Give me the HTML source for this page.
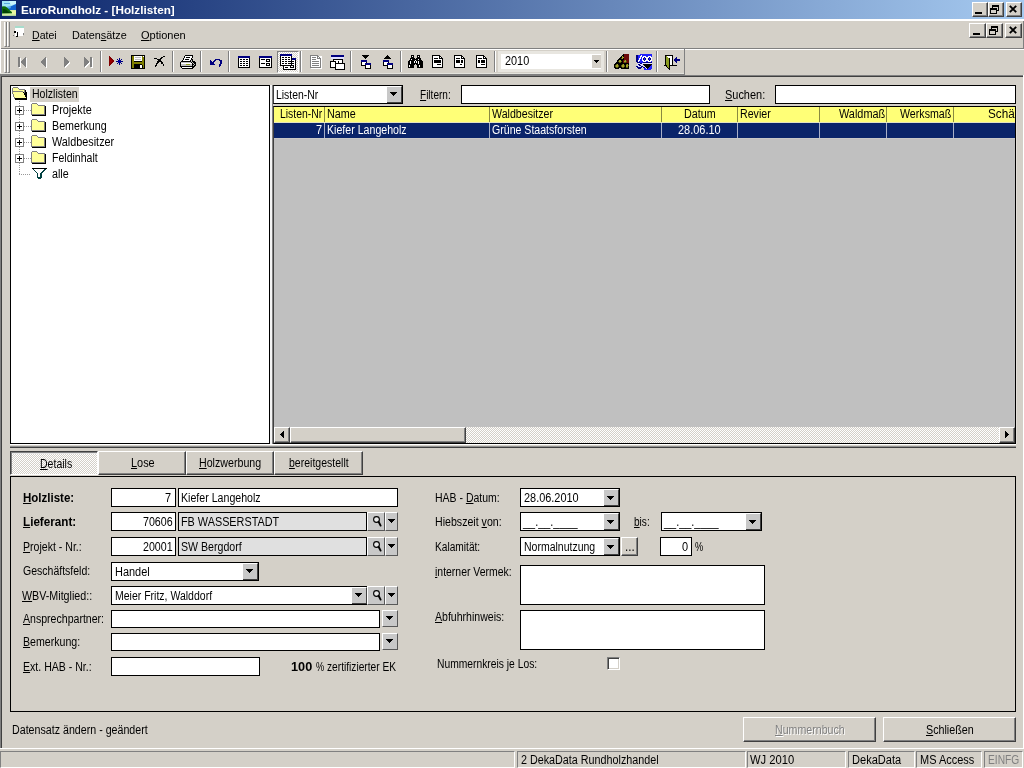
<!DOCTYPE html>
<html lang="de">
<head>
<meta charset="utf-8">
<title>EuroRundholz - [Holzlisten]</title>
<style>
*{box-sizing:border-box;margin:0;padding:0}
html,body{width:1024px;height:768px;overflow:hidden;background:#d4d0c8}
body{position:relative;font-family:"Liberation Sans",sans-serif;font-size:12.5px;line-height:14px;color:#000}
#w{position:absolute;left:0;top:0;width:1024px;height:768px;overflow:hidden;will-change:transform;background:#d4d0c8}
.a{position:absolute}
.t{position:absolute;white-space:nowrap;height:14px;line-height:14px;transform-origin:0 50%}
.tah{font-size:11px}
.wh{color:#fff}
.gry{color:#808080}
.dis{color:#808080;text-shadow:1px 1px 0 #fff}
.b{font-weight:bold}
u{text-decoration:underline;text-underline-offset:1px;text-decoration-thickness:1px}
.fld{position:absolute;background:#fff;border:1px solid #000;height:19px}
.fld.g{background:#e0e0e0}
.fld .t{top:2px}
.dither{background:repeating-conic-gradient(#fff 0% 25%,#d4d0c8 0% 50%) 0 0/2px 2px}
.btn{position:absolute;background:#d4d0c8;border:1px solid;border-color:#fff #404040 #404040 #fff;box-shadow:inset -1px -1px 0 #808080}
.gb{position:absolute;background:#c8c8c8;border:1px solid;border-color:#fff #585858 #585858 #fff}
.vsep{position:absolute;top:51px;height:21px;width:2px;border-left:1px solid #808080;border-right:1px solid #fff}
.grip{position:absolute;width:3px;border-left:1px solid #fff;border-right:1px solid #808080;border-bottom:1px solid #808080}
.sp{position:absolute;top:752px;height:16px;border:1px solid;border-color:#808080 #fff #fff #808080}
.sp .t{top:1px;left:3px}
svg{position:absolute;overflow:visible}
</style>
</head>
<body>
<div id="w">
<!-- TITLE BAR -->
<div class="a" style="left:0;top:0;width:1024px;height:19px;background:linear-gradient(90deg,#0a246a,#a6caf0)"></div>
<div class="a" style="left:0;top:19px;width:1024px;height:2px;background:#fff"></div>
<div class="t b tah wh" style="left:21.1px;top:3px;transform:scaleX(1.066)">EuroRundholz - [Holzlisten]</div>
<svg style="left:2px;top:1px" width="14" height="15" viewBox="0 0 14 15">
<rect width="14" height="15" fill="#9fe4f6"/>
<rect x="2" y="2" width="6" height="1" fill="#58a8e0"/>
<path d="M7 0h7v3l-5 1z" fill="#c8f4fc"/>
<path d="M5 7L14 3V10H5z" fill="#1264d2"/>
<path d="M4 6L8 5L9 7L5 8z" fill="#58b0ee"/>
<path d="M0 9H14V15H0z" fill="#cfeaa0"/>
<path d="M9 9.5H14V13H10z" fill="#e8f6a0"/>
<path d="M0 5.5Q3 4.5 5 6.5Q7 8 8.5 10Q10.5 11 10 12.2L0 12.6z" fill="#0a6a0c"/>
<path d="M1 8Q4 7.5 6 10.5L8.5 12H1z" fill="#024004"/>
<rect x="0" y="14" width="14" height="1" fill="#b4d49a"/>
</svg>
<div class="btn" style="left:972px;top:2px;width:16px;height:15px"></div>
<div class="a" style="left:975px;top:12px;width:7px;height:2px;background:#000"></div>
<div class="btn" style="left:988px;top:2px;width:16px;height:15px"></div>
<svg style="left:990px;top:5px" width="9" height="9" viewBox="0 0 9 9" shape-rendering="crispEdges"><path d="M2 0h7v2h-7z M2 2h1v1h-1z M8 2h1v4h-3v-1h2z M0 3h7v2h-7z M0 5h1v4h-1z M6 5h1v4h-1z M1 8h5v1h-5z" fill="#000"/></svg>
<div class="btn" style="left:1006px;top:2px;width:16px;height:15px"></div>
<svg style="left:1009px;top:5px" width="8" height="8" viewBox="0 0 8 8"><path d="M0.8 0.8L7.2 7.2M7.2 0.8L0.8 7.2" stroke="#000" stroke-width="1.9" fill="none"/></svg>
<!-- MENU BAR -->
<div class="grip" style="left:4px;top:22px;height:25px"></div>
<div class="grip" style="left:7px;top:22px;height:25px"></div>

<div class="t tah" style="left:31.8px;top:28px;transform:scaleX(0.961)"><u>D</u>atei</div>
<div class="t tah" style="left:71.8px;top:28px;transform:scaleX(0.983)">Daten<u>s</u>ätze</div>
<div class="t tah" style="left:141.3px;top:28px;transform:scaleX(1.001)"><u>O</u>ptionen</div>
<div class="btn" style="left:969px;top:23px;width:17px;height:15px"></div>
<div class="a" style="left:973px;top:33px;width:7px;height:2px;background:#000"></div>
<div class="btn" style="left:986px;top:23px;width:17px;height:15px"></div>
<svg style="left:989px;top:26px" width="9" height="9" viewBox="0 0 9 9" shape-rendering="crispEdges"><path d="M2 0h7v2h-7z M2 2h1v1h-1z M8 2h1v4h-3v-1h2z M0 3h7v2h-7z M0 5h1v4h-1z M6 5h1v4h-1z M1 8h5v1h-5z" fill="#000"/></svg>
<div class="btn" style="left:1005px;top:23px;width:17px;height:15px"></div>
<svg style="left:1009px;top:26px" width="8" height="8" viewBox="0 0 8 8"><path d="M0.8 0.8L7.2 7.2M7.2 0.8L0.8 7.2" stroke="#000" stroke-width="1.9" fill="none"/></svg>
<div class="a" style="left:0;top:48px;width:1024px;height:1px;background:#808080"></div>
<div class="a" style="left:0;top:49px;width:1024px;height:1px;background:#fff"></div>
<div class="a" style="left:0;top:21px;width:1px;height:55px;background:#fff"></div>
<div class="a" style="left:1023px;top:21px;width:1px;height:28px;background:#808080"></div>
<div class="a" style="left:1023px;top:75px;width:1px;height:673px;background:#fff"></div>
<!-- TOOLBAR -->
<div class="a" style="left:0;top:73px;width:684px;height:1px;background:#e4e4de"></div>
<div class="a" style="left:0;top:74px;width:685px;height:1px;background:#808080"></div>
<div class="a" style="left:684px;top:49px;width:1px;height:26px;background:#808080"></div>
<div class="a" style="left:0;top:75px;width:1023px;height:1px;background:#808080"></div>
<div class="a" style="left:0;top:76px;width:1023px;height:1px;background:#404040"></div>
<div class="a" style="left:0;top:76px;width:1px;height:672px;background:#808080"></div>
<div class="a" style="left:1px;top:77px;width:1px;height:671px;background:#404040"></div>
<div class="grip" style="left:4px;top:50px;height:23px"></div>
<div class="grip" style="left:7px;top:50px;height:23px"></div>
<div class="vsep" style="left:100px"></div>
<div class="vsep" style="left:172px"></div>
<div class="vsep" style="left:200px"></div>
<div class="vsep" style="left:228px"></div>
<div class="vsep" style="left:300px"></div>
<div class="vsep" style="left:350px"></div>
<div class="vsep" style="left:400px"></div>
<div class="vsep" style="left:494px"></div>
<div class="vsep" style="left:606px"></div>
<div class="vsep" style="left:656px"></div>
<svg style="left:19px;top:58px" width="8" height="10" viewBox="0 0 8 10" shape-rendering="crispEdges"><path fill="#fff" d="M0 0h2v1h-2zM7 0h1v1h-1zM0 1h2v1h-2zM6 1h2v1h-2zM0 2h2v1h-2zM5 2h3v1h-3zM0 3h2v1h-2zM4 3h4v1h-4zM0 4h2v1h-2zM3 4h5v1h-5zM0 5h2v1h-2zM3 5h5v1h-5zM0 6h2v1h-2zM4 6h4v1h-4zM0 7h2v1h-2zM5 7h3v1h-3zM0 8h2v1h-2zM6 8h2v1h-2zM0 9h2v1h-2zM7 9h1v1h-1z"/></svg><svg style="left:18px;top:57px" width="8" height="10" viewBox="0 0 8 10" shape-rendering="crispEdges"><path fill="#808080" d="M0 0h2v1h-2zM7 0h1v1h-1zM0 1h2v1h-2zM6 1h2v1h-2zM0 2h2v1h-2zM5 2h3v1h-3zM0 3h2v1h-2zM4 3h4v1h-4zM0 4h2v1h-2zM3 4h5v1h-5zM0 5h2v1h-2zM3 5h5v1h-5zM0 6h2v1h-2zM4 6h4v1h-4zM0 7h2v1h-2zM5 7h3v1h-3zM0 8h2v1h-2zM6 8h2v1h-2zM0 9h2v1h-2zM7 9h1v1h-1z"/></svg>
<svg style="left:42px;top:58px" width="5" height="10" viewBox="0 0 5 10" shape-rendering="crispEdges"><path fill="#fff" d="M4 0h1v1h-1zM3 1h2v1h-2zM2 2h3v1h-3zM1 3h4v1h-4zM0 4h5v1h-5zM0 5h5v1h-5zM1 6h4v1h-4zM2 7h3v1h-3zM3 8h2v1h-2zM4 9h1v1h-1z"/></svg><svg style="left:41px;top:57px" width="5" height="10" viewBox="0 0 5 10" shape-rendering="crispEdges"><path fill="#808080" d="M4 0h1v1h-1zM3 1h2v1h-2zM2 2h3v1h-3zM1 3h4v1h-4zM0 4h5v1h-5zM0 5h5v1h-5zM1 6h4v1h-4zM2 7h3v1h-3zM3 8h2v1h-2zM4 9h1v1h-1z"/></svg>
<svg style="left:65px;top:58px" width="5" height="10" viewBox="0 0 5 10" shape-rendering="crispEdges"><path fill="#fff" d="M0 0h1v1h-1zM0 1h2v1h-2zM0 2h3v1h-3zM0 3h4v1h-4zM0 4h5v1h-5zM0 5h5v1h-5zM0 6h4v1h-4zM0 7h3v1h-3zM0 8h2v1h-2zM0 9h1v1h-1z"/></svg><svg style="left:64px;top:57px" width="5" height="10" viewBox="0 0 5 10" shape-rendering="crispEdges"><path fill="#808080" d="M0 0h1v1h-1zM0 1h2v1h-2zM0 2h3v1h-3zM0 3h4v1h-4zM0 4h5v1h-5zM0 5h5v1h-5zM0 6h4v1h-4zM0 7h3v1h-3zM0 8h2v1h-2zM0 9h1v1h-1z"/></svg>
<svg style="left:85px;top:58px" width="8" height="10" viewBox="0 0 8 10" shape-rendering="crispEdges"><path fill="#fff" d="M0 0h1v1h-1zM6 0h2v1h-2zM0 1h2v1h-2zM6 1h2v1h-2zM0 2h3v1h-3zM6 2h2v1h-2zM0 3h4v1h-4zM6 3h2v1h-2zM0 4h5v1h-5zM6 4h2v1h-2zM0 5h5v1h-5zM6 5h2v1h-2zM0 6h4v1h-4zM6 6h2v1h-2zM0 7h3v1h-3zM6 7h2v1h-2zM0 8h2v1h-2zM6 8h2v1h-2zM0 9h1v1h-1zM6 9h2v1h-2z"/></svg><svg style="left:84px;top:57px" width="8" height="10" viewBox="0 0 8 10" shape-rendering="crispEdges"><path fill="#808080" d="M0 0h1v1h-1zM6 0h2v1h-2zM0 1h2v1h-2zM6 1h2v1h-2zM0 2h3v1h-3zM6 2h2v1h-2zM0 3h4v1h-4zM6 3h2v1h-2zM0 4h5v1h-5zM6 4h2v1h-2zM0 5h5v1h-5zM6 5h2v1h-2zM0 6h4v1h-4zM6 6h2v1h-2zM0 7h3v1h-3zM6 7h2v1h-2zM0 8h2v1h-2zM6 8h2v1h-2zM0 9h1v1h-1zM6 9h2v1h-2z"/></svg>
<svg style="left:109px;top:56px" width="5" height="10" viewBox="0 0 5 10" shape-rendering="crispEdges"><path fill="#800000" d="M0 0h1v1h-1zM0 1h2v1h-2zM0 2h3v1h-3zM0 3h1v1h-1zM2 3h2v1h-2zM0 4h1v1h-1zM3 4h2v1h-2zM0 5h1v1h-1zM3 5h2v1h-2zM0 6h1v1h-1zM2 6h2v1h-2zM0 7h3v1h-3zM0 8h2v1h-2zM0 9h1v1h-1z"/><path fill="#a00000" d="M1 3h1v1h-1zM1 4h2v1h-2zM1 5h2v1h-2zM1 6h1v1h-1z"/></svg>
<svg style="left:116px;top:58px" width="7" height="7" viewBox="0 0 7 7" shape-rendering="crispEdges"><path fill="#000080" d="M3 0h1v1h-1zM1 1h1v1h-1zM3 1h1v1h-1zM5 1h1v1h-1zM2 2h1v1h-1zM4 2h1v1h-1zM0 3h2v1h-2zM5 3h2v1h-2zM2 4h1v1h-1zM4 4h1v1h-1zM1 5h1v1h-1zM3 5h1v1h-1zM5 5h1v1h-1zM3 6h1v1h-1z"/><path fill="#0000a8" d="M3 2h1v1h-1zM2 3h3v1h-3zM3 4h1v1h-1z"/></svg>
<svg style="left:131px;top:55px" width="14" height="14" viewBox="0 0 14 14" shape-rendering="crispEdges"><path fill="#000" d="M0 0h14v1h-14zM0 1h1v1h-1zM13 1h1v1h-1zM0 2h1v1h-1zM13 2h1v1h-1zM0 3h1v1h-1zM13 3h1v1h-1zM0 4h1v1h-1zM13 4h1v1h-1zM0 5h1v1h-1zM13 5h1v1h-1zM0 6h1v1h-1zM3 6h8v1h-8zM13 6h1v1h-1zM0 7h1v1h-1zM13 7h1v1h-1zM0 8h1v1h-1zM13 8h1v1h-1zM0 9h1v1h-1zM3 9h8v1h-8zM13 9h1v1h-1zM0 10h1v1h-1zM3 10h6v1h-6zM11 10h1v1h-1zM13 10h1v1h-1zM0 11h1v1h-1zM3 11h6v1h-6zM11 11h1v1h-1zM13 11h1v1h-1zM0 12h1v1h-1zM3 12h6v1h-6zM11 12h1v1h-1zM13 12h1v1h-1zM0 13h14v1h-14z"/><path fill="#808000" d="M1 1h2v1h-2zM11 1h1v1h-1zM1 2h2v1h-2zM11 2h2v1h-2zM1 3h2v1h-2zM11 3h2v1h-2zM1 4h2v1h-2zM11 4h2v1h-2zM1 5h2v1h-2zM11 5h2v1h-2zM1 6h2v1h-2zM11 6h2v1h-2zM1 7h12v1h-12zM1 8h12v1h-12zM1 9h2v1h-2zM11 9h2v1h-2zM1 10h2v1h-2zM12 10h1v1h-1zM1 11h2v1h-2zM12 11h1v1h-1zM1 12h2v1h-2zM12 12h1v1h-1z"/><path fill="#fff" d="M3 1h8v1h-8zM12 1h1v1h-1zM3 2h1v1h-1zM10 2h1v1h-1zM3 3h8v1h-8zM3 4h1v1h-1zM10 4h1v1h-1zM3 5h8v1h-8zM9 10h2v1h-2zM9 11h2v1h-2zM9 12h2v1h-2z"/><path fill="#c0c0c0" d="M4 2h6v1h-6zM4 4h6v1h-6z"/></svg>
<svg style="left:154px;top:56px" width="12" height="11" viewBox="0 0 12 11" shape-rendering="crispEdges"><path fill="#000" d="M9 0h2v1h-2zM7 1h2v1h-2zM0 2h3v1h-3zM6 2h2v1h-2zM3 3h4v1h-4zM4 4h3v1h-3zM3 5h5v1h-5zM3 6h2v1h-2zM7 6h2v1h-2zM2 7h2v1h-2zM7 7h2v1h-2zM2 8h1v1h-1zM9 8h1v1h-1zM1 9h2v1h-2zM9 9h1v1h-1zM1 10h1v1h-1z"/></svg>
<svg style="left:180px;top:55px" width="16" height="14" viewBox="0 0 16 14" shape-rendering="crispEdges"><path fill="#000" d="M5 0h8v1h-8zM4 1h1v1h-1zM12 1h1v1h-1zM4 2h1v1h-1zM6 2h4v1h-4zM12 2h1v1h-1zM3 3h1v1h-1zM11 3h1v1h-1zM3 4h1v1h-1zM5 4h4v1h-4zM11 4h2v1h-2zM2 5h1v1h-1zM10 5h1v1h-1zM12 5h1v1h-1zM1 6h10v1h-10zM12 6h3v1h-3zM0 7h1v1h-1zM11 7h1v1h-1zM13 7h3v1h-3zM0 8h1v1h-1zM12 8h1v1h-1zM14 8h2v1h-2zM0 9h1v1h-1zM12 9h2v1h-2zM15 9h1v1h-1zM0 10h1v1h-1zM12 10h1v1h-1zM14 10h2v1h-2zM0 11h15v1h-15zM1 12h1v1h-1zM12 12h2v1h-2zM2 13h11v1h-11z"/><path fill="#fff" d="M5 1h7v1h-7zM5 2h1v1h-1zM10 2h2v1h-2zM4 3h7v1h-7zM4 4h1v1h-1zM9 4h2v1h-2zM3 5h7v1h-7zM1 8h11v1h-11zM2 12h10v1h-10z"/><path fill="#c0c0c0" d="M11 5h1v1h-1zM11 6h1v1h-1zM1 7h10v1h-10zM12 7h1v1h-1zM13 8h1v1h-1zM1 9h5v1h-5zM10 9h2v1h-2zM14 9h1v1h-1zM1 10h11v1h-11zM13 10h1v1h-1z"/><path fill="#8c9c20" d="M6 9h4v1h-4z"/></svg>
<svg style="left:210px;top:59px" width="13" height="8" viewBox="0 0 13 8" shape-rendering="crispEdges"><path fill="#000080" d="M5 0h5v1h-5zM0 1h1v1h-1zM4 1h2v1h-2zM9 1h3v1h-3zM0 2h2v1h-2zM3 2h2v1h-2zM10 2h2v1h-2zM0 3h4v1h-4zM10 3h2v1h-2zM0 4h4v1h-4zM10 4h2v1h-2zM0 5h5v1h-5zM9 5h2v1h-2zM9 6h2v1h-2zM9 7h1v1h-1z"/></svg>
<svg style="left:238px;top:56px" width="12" height="12" viewBox="0 0 12 12" shape-rendering="crispEdges"><path fill="#000080" d="M0 0h12v1h-12zM0 1h12v1h-12z"/><path fill="#000" d="M0 2h1v1h-1zM11 2h1v1h-1zM0 3h1v1h-1zM2 3h2v1h-2zM5 3h2v1h-2zM8 3h2v1h-2zM11 3h1v1h-1zM0 4h1v1h-1zM11 4h1v1h-1zM0 5h1v1h-1zM2 5h2v1h-2zM5 5h2v1h-2zM8 5h2v1h-2zM11 5h1v1h-1zM0 6h1v1h-1zM11 6h1v1h-1zM0 7h1v1h-1zM2 7h2v1h-2zM5 7h2v1h-2zM8 7h2v1h-2zM11 7h1v1h-1zM0 8h1v1h-1zM11 8h1v1h-1zM0 9h1v1h-1zM2 9h2v1h-2zM5 9h2v1h-2zM8 9h2v1h-2zM11 9h1v1h-1zM0 10h1v1h-1zM11 10h1v1h-1zM0 11h12v1h-12z"/><path fill="#fff" d="M1 2h10v1h-10zM1 3h1v1h-1zM4 3h1v1h-1zM7 3h1v1h-1zM10 3h1v1h-1zM1 4h10v1h-10zM1 5h1v1h-1zM4 5h1v1h-1zM7 5h1v1h-1zM10 5h1v1h-1zM1 6h10v1h-10zM1 7h1v1h-1zM4 7h1v1h-1zM7 7h1v1h-1zM10 7h1v1h-1zM1 8h10v1h-10zM1 9h1v1h-1zM4 9h1v1h-1zM7 9h1v1h-1zM10 9h1v1h-1zM1 10h10v1h-10z"/></svg>
<svg style="left:259px;top:56px" width="13" height="12" viewBox="0 0 13 12" shape-rendering="crispEdges"><path fill="#000080" d="M0 0h13v1h-13zM0 1h13v1h-13z"/><path fill="#000" d="M0 2h1v1h-1zM12 2h1v1h-1zM0 3h1v1h-1zM2 3h4v1h-4zM7 3h4v1h-4zM12 3h1v1h-1zM0 4h1v1h-1zM7 4h1v1h-1zM10 4h1v1h-1zM12 4h1v1h-1zM0 5h1v1h-1zM7 5h4v1h-4zM12 5h1v1h-1zM0 6h1v1h-1zM12 6h1v1h-1zM0 7h1v1h-1zM2 7h4v1h-4zM7 7h4v1h-4zM12 7h1v1h-1zM0 8h1v1h-1zM7 8h1v1h-1zM10 8h1v1h-1zM12 8h1v1h-1zM0 9h1v1h-1zM7 9h4v1h-4zM12 9h1v1h-1zM0 10h1v1h-1zM12 10h1v1h-1zM0 11h13v1h-13z"/><path fill="#fff" d="M1 2h11v1h-11zM1 3h1v1h-1zM6 3h1v1h-1zM11 3h1v1h-1zM1 4h6v1h-6zM8 4h2v1h-2zM11 4h1v1h-1zM1 5h6v1h-6zM11 5h1v1h-1zM1 6h11v1h-11zM1 7h1v1h-1zM6 7h1v1h-1zM11 7h1v1h-1zM1 8h6v1h-6zM8 8h2v1h-2zM11 8h1v1h-1zM1 9h6v1h-6zM11 9h1v1h-1zM1 10h11v1h-11z"/></svg>
<div class="a dither" style="left:277px;top:51px;width:22px;height:22px;border:1px solid;border-color:#808080 #fff #fff #808080"></div>
<svg style="left:280px;top:54px" width="16" height="16" viewBox="0 0 16 16" shape-rendering="crispEdges"><path fill="#000080" d="M0 0h12v1h-12zM0 1h12v1h-12zM12 4h4v1h-4zM12 5h4v1h-4z"/><path fill="#000" d="M0 2h1v1h-1zM11 2h1v1h-1zM0 3h1v1h-1zM2 3h2v1h-2zM5 3h2v1h-2zM8 3h2v1h-2zM11 3h1v1h-1zM0 4h1v1h-1zM11 4h1v1h-1zM0 5h1v1h-1zM2 5h2v1h-2zM5 5h2v1h-2zM8 5h2v1h-2zM11 5h1v1h-1zM0 6h1v1h-1zM11 6h1v1h-1zM15 6h1v1h-1zM0 7h1v1h-1zM2 7h2v1h-2zM5 7h2v1h-2zM8 7h6v1h-6zM15 7h1v1h-1zM0 8h1v1h-1zM11 8h1v1h-1zM15 8h1v1h-1zM0 9h1v1h-1zM2 9h2v1h-2zM5 9h2v1h-2zM8 9h6v1h-6zM15 9h1v1h-1zM0 10h1v1h-1zM11 10h1v1h-1zM15 10h1v1h-1zM0 11h14v1h-14zM15 11h1v1h-1zM3 12h1v1h-1zM10 12h1v1h-1zM13 12h1v1h-1zM15 12h1v1h-1zM3 13h1v1h-1zM5 13h3v1h-3zM10 13h4v1h-4zM15 13h1v1h-1zM3 14h1v1h-1zM15 14h1v1h-1zM3 15h13v1h-13z"/><path fill="#fff" d="M1 2h10v1h-10zM1 3h1v1h-1zM4 3h1v1h-1zM7 3h1v1h-1zM10 3h1v1h-1zM1 4h10v1h-10zM1 5h1v1h-1zM4 5h1v1h-1zM7 5h1v1h-1zM10 5h1v1h-1zM1 6h10v1h-10zM12 6h3v1h-3zM1 7h1v1h-1zM4 7h1v1h-1zM7 7h1v1h-1zM14 7h1v1h-1zM1 8h10v1h-10zM12 8h3v1h-3zM1 9h1v1h-1zM4 9h1v1h-1zM7 9h1v1h-1zM14 9h1v1h-1zM1 10h10v1h-10zM12 10h3v1h-3zM14 11h1v1h-1zM4 12h6v1h-6zM11 12h2v1h-2zM14 12h1v1h-1zM4 13h1v1h-1zM8 13h2v1h-2zM14 13h1v1h-1zM4 14h11v1h-11z"/></svg>
<div class="a" style="left:311px;top:56px;width:11px;height:13px;background:#fff"></div>
<svg style="left:310px;top:55px" width="11" height="13" viewBox="0 0 11 13" shape-rendering="crispEdges"><path fill="#808080" d="M0 0h8v1h-8zM0 1h1v1h-1zM7 1h2v1h-2zM0 2h1v1h-1zM2 2h4v1h-4zM7 2h1v1h-1zM9 2h1v1h-1zM0 3h1v1h-1zM7 3h4v1h-4zM0 4h1v1h-1zM2 4h4v1h-4zM10 4h1v1h-1zM0 5h1v1h-1zM10 5h1v1h-1zM0 6h1v1h-1zM2 6h7v1h-7zM10 6h1v1h-1zM0 7h1v1h-1zM10 7h1v1h-1zM0 8h1v1h-1zM2 8h7v1h-7zM10 8h1v1h-1zM0 9h1v1h-1zM10 9h1v1h-1zM0 10h1v1h-1zM2 10h7v1h-7zM10 10h1v1h-1zM0 11h1v1h-1zM10 11h1v1h-1zM0 12h11v1h-11z"/><path fill="#fff" d="M1 1h6v1h-6zM1 2h1v1h-1zM6 2h1v1h-1zM8 2h1v1h-1zM1 3h6v1h-6zM1 4h1v1h-1zM6 4h4v1h-4zM1 5h9v1h-9zM1 6h1v1h-1zM9 6h1v1h-1zM1 7h9v1h-9zM1 8h1v1h-1zM9 8h1v1h-1zM1 9h9v1h-9zM1 10h1v1h-1zM9 10h1v1h-1zM1 11h9v1h-9z"/></svg>
<svg style="left:330px;top:55px" width="15" height="15" viewBox="0 0 15 15" shape-rendering="crispEdges"><path fill="#000080" d="M1 0h13v1h-13zM1 1h13v1h-13z"/><path fill="#e0e0ff" d="M1 2h13v1h-13zM1 3h13v1h-13z"/><path fill="#000" d="M3 4h10v1h-10zM3 5h1v1h-1zM12 5h1v1h-1zM0 6h6v1h-6zM8 6h1v1h-1zM12 6h1v1h-1zM0 7h1v1h-1zM5 7h1v1h-1zM8 7h1v1h-1zM12 7h1v1h-1zM0 8h1v1h-1zM5 8h10v1h-10zM0 9h1v1h-1zM5 9h1v1h-1zM14 9h1v1h-1zM0 10h1v1h-1zM5 10h1v1h-1zM14 10h1v1h-1zM0 11h1v1h-1zM5 11h1v1h-1zM14 11h1v1h-1zM0 12h6v1h-6zM14 12h1v1h-1zM5 13h1v1h-1zM14 13h1v1h-1zM5 14h10v1h-10z"/><path fill="#fff" d="M4 5h8v1h-8zM6 6h2v1h-2zM9 6h3v1h-3zM1 7h4v1h-4zM6 7h2v1h-2zM9 7h3v1h-3zM1 8h4v1h-4zM1 9h4v1h-4zM6 9h8v1h-8zM1 10h4v1h-4zM6 10h8v1h-8zM1 11h4v1h-4zM6 11h8v1h-8zM6 12h8v1h-8zM6 13h8v1h-8z"/></svg>
<svg style="left:361px;top:55px" width="10" height="14" viewBox="0 0 10 14" shape-rendering="crispEdges"><path fill="#000" d="M1 0h7v1h-7zM2 1h5v1h-5zM3 2h3v1h-3zM4 3h1v1h-1zM0 7h1v1h-1zM5 7h1v1h-1zM0 8h1v1h-1zM0 9h1v1h-1zM0 10h5v1h-5zM9 10h1v1h-1zM4 11h1v1h-1zM9 11h1v1h-1zM4 12h1v1h-1zM9 12h1v1h-1zM4 13h6v1h-6z"/><path fill="#000080" d="M0 5h6v1h-6zM0 6h6v1h-6zM4 8h6v1h-6zM4 9h6v1h-6z"/><path fill="#fff" d="M1 7h4v1h-4zM1 8h3v1h-3zM1 9h3v1h-3zM5 10h4v1h-4zM5 11h4v1h-4zM5 12h4v1h-4z"/></svg>
<svg style="left:383px;top:55px" width="10" height="14" viewBox="0 0 10 14" shape-rendering="crispEdges"><path fill="#000" d="M4 0h1v1h-1zM3 1h3v1h-3zM2 2h5v1h-5zM1 3h7v1h-7zM0 7h1v1h-1zM5 7h1v1h-1zM0 8h1v1h-1zM0 9h1v1h-1zM0 10h5v1h-5zM9 10h1v1h-1zM4 11h1v1h-1zM9 11h1v1h-1zM4 12h1v1h-1zM9 12h1v1h-1zM4 13h6v1h-6z"/><path fill="#000080" d="M0 5h6v1h-6zM0 6h6v1h-6zM4 8h6v1h-6zM4 9h6v1h-6z"/><path fill="#fff" d="M1 7h4v1h-4zM1 8h3v1h-3zM1 9h3v1h-3zM5 10h4v1h-4zM5 11h4v1h-4zM5 12h4v1h-4z"/></svg>
<svg style="left:408px;top:55px" width="15" height="13" viewBox="0 0 15 13" shape-rendering="crispEdges"><path fill="#000" d="M3 0h3v1h-3zM9 0h3v1h-3zM3 1h1v1h-1zM5 1h1v1h-1zM9 1h1v1h-1zM11 1h1v1h-1zM3 2h3v1h-3zM9 2h3v1h-3zM2 3h5v1h-5zM8 3h5v1h-5zM2 4h1v1h-1zM4 4h6v1h-6zM11 4h2v1h-2zM1 5h6v1h-6zM8 5h6v1h-6zM0 6h2v1h-2zM3 6h3v1h-3zM7 6h1v1h-1zM9 6h1v1h-1zM11 6h4v1h-4zM0 7h2v1h-2zM3 7h3v1h-3zM7 7h1v1h-1zM9 7h1v1h-1zM11 7h4v1h-4zM0 8h2v1h-2zM3 8h7v1h-7zM11 8h4v1h-4zM0 9h7v1h-7zM8 9h7v1h-7zM0 10h1v1h-1zM2 10h4v1h-4zM9 10h2v1h-2zM12 10h3v1h-3zM0 11h1v1h-1zM2 11h4v1h-4zM9 11h2v1h-2zM12 11h3v1h-3zM0 12h6v1h-6zM9 12h6v1h-6z"/><path fill="#fff" d="M4 1h1v1h-1zM10 1h1v1h-1zM3 4h1v1h-1zM10 4h1v1h-1zM7 5h1v1h-1zM2 6h1v1h-1zM6 6h1v1h-1zM8 6h1v1h-1zM10 6h1v1h-1zM2 7h1v1h-1zM6 7h1v1h-1zM8 7h1v1h-1zM10 7h1v1h-1zM2 8h1v1h-1zM10 8h1v1h-1zM1 10h1v1h-1zM11 10h1v1h-1zM1 11h1v1h-1zM11 11h1v1h-1z"/></svg>
<svg style="left:432px;top:55px" width="11" height="13" viewBox="0 0 11 13" shape-rendering="crispEdges"><path fill="#000" d="M0 0h8v1h-8zM0 1h1v1h-1zM7 1h2v1h-2zM0 2h1v1h-1zM7 2h1v1h-1zM9 2h1v1h-1zM0 3h1v1h-1zM2 3h4v1h-4zM7 3h4v1h-4zM0 4h1v1h-1zM10 4h1v1h-1zM0 5h1v1h-1zM2 5h7v1h-7zM10 5h1v1h-1zM0 6h1v1h-1zM2 6h7v1h-7zM10 6h1v1h-1zM0 7h1v1h-1zM2 7h7v1h-7zM10 7h1v1h-1zM0 8h1v1h-1zM10 8h1v1h-1zM0 9h1v1h-1zM5 9h4v1h-4zM10 9h1v1h-1zM0 10h1v1h-1zM10 10h1v1h-1zM0 11h1v1h-1zM10 11h1v1h-1zM0 12h11v1h-11z"/><path fill="#fff" d="M1 1h6v1h-6zM1 2h6v1h-6zM8 2h1v1h-1zM1 3h1v1h-1zM6 3h1v1h-1zM1 4h9v1h-9zM1 5h1v1h-1zM9 5h1v1h-1zM1 6h1v1h-1zM9 6h1v1h-1zM1 7h1v1h-1zM9 7h1v1h-1zM1 8h9v1h-9zM1 9h4v1h-4zM9 9h1v1h-1zM1 10h9v1h-9zM1 11h9v1h-9z"/></svg>
<svg style="left:454px;top:55px" width="11" height="13" viewBox="0 0 11 13" shape-rendering="crispEdges"><path fill="#000" d="M0 0h8v1h-8zM0 1h1v1h-1zM7 1h2v1h-2zM0 2h1v1h-1zM7 2h1v1h-1zM9 2h1v1h-1zM0 3h1v1h-1zM2 3h4v1h-4zM7 3h4v1h-4zM0 4h1v1h-1zM10 4h1v1h-1zM0 5h1v1h-1zM2 5h4v1h-4zM7 5h2v1h-2zM10 5h1v1h-1zM0 6h1v1h-1zM2 6h4v1h-4zM7 6h2v1h-2zM10 6h1v1h-1zM0 7h1v1h-1zM2 7h4v1h-4zM7 7h2v1h-2zM10 7h1v1h-1zM0 8h1v1h-1zM10 8h1v1h-1zM0 9h1v1h-1zM6 9h2v1h-2zM10 9h1v1h-1zM0 10h1v1h-1zM10 10h1v1h-1zM0 11h1v1h-1zM10 11h1v1h-1zM0 12h11v1h-11z"/><path fill="#fff" d="M1 1h6v1h-6zM1 2h6v1h-6zM8 2h1v1h-1zM1 3h1v1h-1zM6 3h1v1h-1zM1 4h9v1h-9zM1 5h1v1h-1zM6 5h1v1h-1zM9 5h1v1h-1zM1 6h1v1h-1zM6 6h1v1h-1zM9 6h1v1h-1zM1 7h1v1h-1zM6 7h1v1h-1zM9 7h1v1h-1zM1 8h9v1h-9zM1 9h5v1h-5zM8 9h2v1h-2zM1 10h9v1h-9zM1 11h9v1h-9z"/></svg>
<svg style="left:476px;top:55px" width="11" height="13" viewBox="0 0 11 13" shape-rendering="crispEdges"><path fill="#000" d="M0 0h8v1h-8zM0 1h1v1h-1zM7 1h2v1h-2zM0 2h1v1h-1zM7 2h1v1h-1zM9 2h1v1h-1zM0 3h1v1h-1zM2 3h4v1h-4zM7 3h4v1h-4zM0 4h1v1h-1zM10 4h1v1h-1zM0 5h1v1h-1zM2 5h2v1h-2zM5 5h4v1h-4zM10 5h1v1h-1zM0 6h1v1h-1zM2 6h2v1h-2zM5 6h4v1h-4zM10 6h1v1h-1zM0 7h1v1h-1zM2 7h2v1h-2zM5 7h4v1h-4zM10 7h1v1h-1zM0 8h1v1h-1zM10 8h1v1h-1zM0 9h1v1h-1zM5 9h4v1h-4zM10 9h1v1h-1zM0 10h1v1h-1zM10 10h1v1h-1zM0 11h1v1h-1zM10 11h1v1h-1zM0 12h11v1h-11z"/><path fill="#fff" d="M1 1h6v1h-6zM1 2h6v1h-6zM8 2h1v1h-1zM1 3h1v1h-1zM6 3h1v1h-1zM1 4h9v1h-9zM1 5h1v1h-1zM4 5h1v1h-1zM9 5h1v1h-1zM1 6h1v1h-1zM4 6h1v1h-1zM9 6h1v1h-1zM1 7h1v1h-1zM4 7h1v1h-1zM9 7h1v1h-1zM1 8h9v1h-9zM1 9h4v1h-4zM9 9h1v1h-1zM1 10h9v1h-9zM1 11h9v1h-9z"/></svg>
<div class="a" style="left:498px;top:51px;width:106px;height:21px;background:#e8e6e0"></div>
<div class="a" style="left:501px;top:54px;width:100px;height:15px;background:#fff"></div>
<div class="a" style="left:592px;top:55px;width:9px;height:13px;background:#d4d0c8"></div>
<svg style="left:594px;top:60px" width="5" height="3" viewBox="0 0 5 3" shape-rendering="crispEdges"><path fill="#000" d="M0 0h5v1h-5zM1 1h3v1h-3zM2 2h1v1h-1z"/></svg>
<div class="t " style="left:504.9px;top:54px;transform:scaleX(0.870)">2010</div>
<svg style="left:614px;top:54px" width="16" height="15" viewBox="0 0 16 15" shape-rendering="crispEdges"><path fill="#000" d="M9 0h1v1h-1zM8 1h2v1h-2zM7 2h1v1h-1zM9 2h1v1h-1zM6 3h2v1h-2zM5 4h2v1h-2zM9 4h1v1h-1zM4 5h6v1h-6zM3 6h2v1h-2zM7 6h2v1h-2zM3 7h1v1h-1zM8 7h1v1h-1zM2 8h3v1h-3zM7 8h2v1h-2zM1 9h14v1h-14zM0 10h2v1h-2zM4 10h4v1h-4zM10 10h2v1h-2zM14 10h1v1h-1zM0 11h1v1h-1zM5 11h2v1h-2zM11 11h1v1h-1zM0 12h1v1h-1zM5 12h2v1h-2zM11 12h1v1h-1zM14 12h1v1h-1zM0 13h2v1h-2zM4 13h4v1h-4zM10 13h2v1h-2zM14 13h1v1h-1zM1 14h4v1h-4zM7 14h8v1h-8z"/><path fill="#6c0808" d="M10 0h5v1h-5zM10 1h5v1h-5zM10 2h5v1h-5zM10 3h5v1h-5zM10 4h5v1h-5zM10 5h5v1h-5zM9 6h1v1h-1zM12 6h3v1h-3zM9 7h1v1h-1zM13 7h2v1h-2zM9 8h1v1h-1zM12 8h3v1h-3z"/><path fill="#a4a428" d="M8 2h1v1h-1zM8 3h2v1h-2zM8 4h1v1h-1zM5 6h2v1h-2zM11 6h1v1h-1zM5 7h2v1h-2zM10 7h2v1h-2zM3 10h1v1h-1zM9 10h1v1h-1zM13 10h1v1h-1zM2 11h2v1h-2zM8 11h2v1h-2zM12 11h2v1h-2zM2 12h2v1h-2zM8 12h2v1h-2zM12 12h2v1h-2z"/><path fill="#5c5c10" d="M7 4h1v1h-1zM10 6h1v1h-1zM4 7h1v1h-1zM7 7h1v1h-1zM12 7h1v1h-1zM5 8h2v1h-2zM10 8h2v1h-2zM2 10h1v1h-1zM8 10h1v1h-1zM12 10h1v1h-1zM1 11h1v1h-1zM4 11h1v1h-1zM7 11h1v1h-1zM10 11h1v1h-1zM14 11h1v1h-1zM1 12h1v1h-1zM4 12h1v1h-1zM7 12h1v1h-1zM10 12h1v1h-1zM2 13h2v1h-2zM8 13h2v1h-2zM12 13h2v1h-2z"/></svg>
<svg style="left:636px;top:54px" width="16" height="16" viewBox="0 0 16 16" shape-rendering="crispEdges"><path fill="#2020ff" d="M4 0h12v1h-12zM2 1h3v1h-3zM6 1h10v1h-10zM2 2h2v1h-2zM6 2h1v1h-1zM10 2h2v1h-2zM15 2h1v1h-1zM2 3h2v1h-2zM5 3h1v1h-1zM2 4h1v1h-1zM5 4h1v1h-1zM8 4h1v1h-1zM13 4h1v1h-1zM2 5h1v1h-1zM4 5h2v1h-2zM8 5h1v1h-1zM13 5h1v1h-1zM4 6h2v1h-2zM3 7h4v1h-4zM10 7h2v1h-2zM15 7h1v1h-1zM4 8h3v1h-3zM15 11h1v1h-1zM14 12h2v1h-2zM13 13h3v1h-3zM8 14h2v1h-2zM12 14h4v1h-4zM8 15h7v1h-7z"/><path fill="#000080" d="M0 1h2v1h-2zM0 2h2v1h-2zM0 3h2v1h-2zM8 3h1v1h-1zM13 3h1v1h-1zM0 4h2v1h-2zM7 4h1v1h-1zM9 4h1v1h-1zM12 4h1v1h-1zM14 4h1v1h-1zM0 5h2v1h-2zM7 5h1v1h-1zM9 5h1v1h-1zM12 5h1v1h-1zM14 5h1v1h-1zM0 6h2v1h-2zM8 6h1v1h-1zM13 6h1v1h-1zM0 7h2v1h-2zM1 8h3v1h-3zM7 8h9v1h-9zM4 9h2v1h-2zM2 10h2v1h-2zM3 11h2v1h-2zM0 12h2v1h-2zM5 12h2v1h-2zM1 13h5v1h-5zM7 13h2v1h-2zM2 14h3v1h-3z"/><path fill="#fff" d="M5 1h1v1h-1zM4 2h2v1h-2zM7 2h3v1h-3zM12 2h3v1h-3zM4 3h1v1h-1zM6 3h2v1h-2zM9 3h4v1h-4zM14 3h2v1h-2zM3 4h2v1h-2zM6 4h1v1h-1zM10 4h2v1h-2zM15 4h1v1h-1zM3 5h1v1h-1zM6 5h1v1h-1zM10 5h2v1h-2zM15 5h1v1h-1zM2 6h2v1h-2zM6 6h2v1h-2zM9 6h4v1h-4zM14 6h2v1h-2zM2 7h1v1h-1zM7 7h3v1h-3zM12 7h3v1h-3z"/><path fill="#e0e0ff" d="M2 9h2v1h-2zM6 9h10v1h-10zM1 10h1v1h-1zM4 10h3v1h-3zM1 11h2v1h-2zM5 11h2v1h-2zM2 12h3v1h-3zM8 12h1v1h-1zM0 13h1v1h-1zM6 13h1v1h-1zM9 13h1v1h-1zM10 14h1v1h-1z"/><path fill="#000" d="M7 10h9v1h-9zM8 11h7v1h-7zM9 12h5v1h-5zM10 13h3v1h-3zM11 14h1v1h-1z"/></svg>
<svg style="left:664px;top:55px" width="16" height="15" viewBox="0 0 16 15" shape-rendering="crispEdges"><path fill="#000" d="M1 0h8v1h-8zM1 1h1v1h-1zM8 1h1v1h-1zM1 2h1v1h-1zM8 2h1v1h-1zM1 3h1v1h-1zM5 3h1v1h-1zM8 3h1v1h-1zM1 4h1v1h-1zM5 4h1v1h-1zM8 4h1v1h-1zM1 5h1v1h-1zM5 5h1v1h-1zM8 5h1v1h-1zM1 6h1v1h-1zM5 6h1v1h-1zM8 6h1v1h-1zM1 7h1v1h-1zM5 7h1v1h-1zM8 7h1v1h-1zM1 8h1v1h-1zM5 8h1v1h-1zM8 8h1v1h-1zM1 9h1v1h-1zM5 9h1v1h-1zM8 9h1v1h-1zM0 10h3v1h-3zM5 10h8v1h-8zM2 11h1v1h-1zM5 11h1v1h-1zM3 12h1v1h-1zM5 12h1v1h-1zM4 13h2v1h-2zM5 14h1v1h-1z"/><path fill="#8c9c20" d="M2 1h1v1h-1zM2 2h2v1h-2zM2 3h3v1h-3zM2 4h3v1h-3zM2 5h3v1h-3zM2 6h3v1h-3zM2 7h3v1h-3zM2 8h3v1h-3zM2 9h3v1h-3zM3 10h2v1h-2zM3 11h2v1h-2zM4 12h1v1h-1z"/><path fill="#fff" d="M3 1h5v1h-5zM4 2h4v1h-4zM6 3h2v1h-2zM6 4h2v1h-2zM6 5h2v1h-2zM6 6h2v1h-2zM6 7h2v1h-2zM6 8h2v1h-2zM6 9h2v1h-2z"/><path fill="#000080" d="M12 2h1v1h-1zM11 3h2v1h-2zM10 4h6v1h-6zM10 5h6v1h-6zM11 6h2v1h-2zM12 7h1v1h-1z"/></svg>
<svg style="left:12px;top:25px" width="13" height="12" viewBox="0 0 13 12" shape-rendering="crispEdges"><path fill="#a8dccc" d="M3 1h9v1h-9zM3 2h9v1h-9z"/><path fill="#fff" d="M3 3h9v1h-9zM3 4h9v1h-9zM3 5h9v1h-9zM4 6h8v1h-8zM4 7h1v1h-1zM6 7h6v1h-6zM3 8h2v1h-2zM6 8h5v1h-5zM3 9h2v1h-2zM6 9h5v1h-5zM3 10h2v1h-2zM6 10h5v1h-5z"/><path fill="#000" d="M2 6h2v1h-2zM2 7h2v1h-2zM5 7h1v1h-1zM5 8h1v1h-1zM5 9h1v1h-1zM5 10h1v1h-1zM4 11h2v1h-2z"/><path fill="#808080" d="M11 8h1v1h-1zM11 9h1v1h-1zM1 10h1v1h-1z"/></svg>
<!-- TREE -->
<div class="a" style="left:10px;top:85px;width:260px;height:359px;background:#fff;border:1px solid #000"></div>
<div class="a" style="left:19px;top:101px;width:1px;height:74px;background:repeating-linear-gradient(180deg,#989898 0 1px,transparent 1px 2px)"></div>
<div class="a" style="left:24px;top:110px;width:7px;height:1px;background:repeating-linear-gradient(90deg,#989898 0 1px,transparent 1px 2px)"></div>
<div class="a" style="left:24px;top:126px;width:7px;height:1px;background:repeating-linear-gradient(90deg,#989898 0 1px,transparent 1px 2px)"></div>
<div class="a" style="left:24px;top:142px;width:7px;height:1px;background:repeating-linear-gradient(90deg,#989898 0 1px,transparent 1px 2px)"></div>
<div class="a" style="left:24px;top:158px;width:7px;height:1px;background:repeating-linear-gradient(90deg,#989898 0 1px,transparent 1px 2px)"></div>
<div class="a" style="left:19px;top:174px;width:12px;height:1px;background:repeating-linear-gradient(90deg,#989898 0 1px,transparent 1px 2px)"></div>
<svg style="left:12px;top:87px" width="15" height="13" viewBox="0 0 15 13" shape-rendering="crispEdges"><path fill="#808080" d="M1 0h5v1h-5zM0 1h1v1h-1zM6 1h1v1h-1zM0 2h1v1h-1zM7 2h6v1h-6zM0 3h1v1h-1zM12 3h1v1h-1zM0 4h11v1h-11zM12 4h1v1h-1zM0 5h1v1h-1zM12 5h1v1h-1zM0 6h1v1h-1zM1 7h1v1h-1zM1 8h1v1h-1zM1 9h1v1h-1zM2 10h1v1h-1zM2 11h1v1h-1z"/><path fill="#ffff99" d="M1 1h5v1h-5zM1 2h6v1h-6zM1 3h11v1h-11zM11 4h1v1h-1zM1 5h10v1h-10zM1 6h11v1h-11zM2 7h10v1h-10zM2 8h11v1h-11zM2 9h11v1h-11zM3 10h11v1h-11z"/><path fill="#000" d="M13 3h1v1h-1zM13 4h1v1h-1zM11 5h1v1h-1zM13 5h2v1h-2zM12 6h3v1h-3zM12 7h3v1h-3zM13 8h2v1h-2zM13 9h2v1h-2zM14 10h1v1h-1zM3 11h12v1h-12zM3 12h12v1h-12z"/></svg>
<div class="a" style="left:30px;top:87px;width:49px;height:15px;background:#d4d0c8"></div>
<div class="t " style="left:31.8px;top:87px;transform:scaleX(0.843)">Holzlisten</div>
<svg style="left:15px;top:106px" width="9" height="9" viewBox="0 0 9 9" shape-rendering="crispEdges"><path fill="#808080" d="M0 0h9v1h-9zM0 1h1v1h-1zM8 1h1v1h-1zM0 2h1v1h-1zM8 2h1v1h-1zM0 3h1v1h-1zM8 3h1v1h-1zM0 4h1v1h-1zM8 4h1v1h-1zM0 5h1v1h-1zM8 5h1v1h-1zM0 6h1v1h-1zM8 6h1v1h-1zM0 7h1v1h-1zM8 7h1v1h-1zM0 8h9v1h-9z"/><path fill="#fff" d="M1 1h7v1h-7zM1 2h3v1h-3zM5 2h3v1h-3zM1 3h3v1h-3zM5 3h3v1h-3zM1 4h1v1h-1zM7 4h1v1h-1zM1 5h3v1h-3zM5 5h3v1h-3zM1 6h3v1h-3zM5 6h3v1h-3zM1 7h7v1h-7z"/><path fill="#000" d="M4 2h1v1h-1zM4 3h1v1h-1zM2 4h5v1h-5zM4 5h1v1h-1zM4 6h1v1h-1z"/></svg>
<svg style="left:31px;top:103px" width="15" height="13" viewBox="0 0 15 13" shape-rendering="crispEdges"><path fill="#808080" d="M1 0h5v1h-5zM0 1h1v1h-1zM6 1h1v1h-1zM0 2h1v1h-1zM7 2h7v1h-7zM0 3h1v1h-1zM13 3h1v1h-1zM0 4h1v1h-1zM13 4h1v1h-1zM0 5h1v1h-1zM13 5h1v1h-1zM0 6h1v1h-1zM13 6h1v1h-1zM0 7h1v1h-1zM13 7h1v1h-1zM0 8h1v1h-1zM13 8h1v1h-1zM0 9h1v1h-1zM13 9h1v1h-1zM0 10h1v1h-1zM13 10h1v1h-1zM0 11h14v1h-14z"/><path fill="#ffff99" d="M1 1h5v1h-5zM1 2h6v1h-6zM1 3h12v1h-12zM1 4h12v1h-12zM1 5h12v1h-12zM1 6h12v1h-12zM1 7h12v1h-12zM1 8h12v1h-12zM1 9h12v1h-12zM1 10h12v1h-12z"/><path fill="#000" d="M14 3h1v1h-1zM14 4h1v1h-1zM14 5h1v1h-1zM14 6h1v1h-1zM14 7h1v1h-1zM14 8h1v1h-1zM14 9h1v1h-1zM14 10h1v1h-1zM14 11h1v1h-1zM1 12h14v1h-14z"/></svg>
<div class="t " style="left:51.6px;top:103px;transform:scaleX(0.866)">Projekte</div>
<svg style="left:15px;top:122px" width="9" height="9" viewBox="0 0 9 9" shape-rendering="crispEdges"><path fill="#808080" d="M0 0h9v1h-9zM0 1h1v1h-1zM8 1h1v1h-1zM0 2h1v1h-1zM8 2h1v1h-1zM0 3h1v1h-1zM8 3h1v1h-1zM0 4h1v1h-1zM8 4h1v1h-1zM0 5h1v1h-1zM8 5h1v1h-1zM0 6h1v1h-1zM8 6h1v1h-1zM0 7h1v1h-1zM8 7h1v1h-1zM0 8h9v1h-9z"/><path fill="#fff" d="M1 1h7v1h-7zM1 2h3v1h-3zM5 2h3v1h-3zM1 3h3v1h-3zM5 3h3v1h-3zM1 4h1v1h-1zM7 4h1v1h-1zM1 5h3v1h-3zM5 5h3v1h-3zM1 6h3v1h-3zM5 6h3v1h-3zM1 7h7v1h-7z"/><path fill="#000" d="M4 2h1v1h-1zM4 3h1v1h-1zM2 4h5v1h-5zM4 5h1v1h-1zM4 6h1v1h-1z"/></svg>
<svg style="left:31px;top:119px" width="15" height="13" viewBox="0 0 15 13" shape-rendering="crispEdges"><path fill="#808080" d="M1 0h5v1h-5zM0 1h1v1h-1zM6 1h1v1h-1zM0 2h1v1h-1zM7 2h7v1h-7zM0 3h1v1h-1zM13 3h1v1h-1zM0 4h1v1h-1zM13 4h1v1h-1zM0 5h1v1h-1zM13 5h1v1h-1zM0 6h1v1h-1zM13 6h1v1h-1zM0 7h1v1h-1zM13 7h1v1h-1zM0 8h1v1h-1zM13 8h1v1h-1zM0 9h1v1h-1zM13 9h1v1h-1zM0 10h1v1h-1zM13 10h1v1h-1zM0 11h14v1h-14z"/><path fill="#ffff99" d="M1 1h5v1h-5zM1 2h6v1h-6zM1 3h12v1h-12zM1 4h12v1h-12zM1 5h12v1h-12zM1 6h12v1h-12zM1 7h12v1h-12zM1 8h12v1h-12zM1 9h12v1h-12zM1 10h12v1h-12z"/><path fill="#000" d="M14 3h1v1h-1zM14 4h1v1h-1zM14 5h1v1h-1zM14 6h1v1h-1zM14 7h1v1h-1zM14 8h1v1h-1zM14 9h1v1h-1zM14 10h1v1h-1zM14 11h1v1h-1zM1 12h14v1h-14z"/></svg>
<div class="t " style="left:51.6px;top:119px;transform:scaleX(0.856)">Bemerkung</div>
<svg style="left:15px;top:138px" width="9" height="9" viewBox="0 0 9 9" shape-rendering="crispEdges"><path fill="#808080" d="M0 0h9v1h-9zM0 1h1v1h-1zM8 1h1v1h-1zM0 2h1v1h-1zM8 2h1v1h-1zM0 3h1v1h-1zM8 3h1v1h-1zM0 4h1v1h-1zM8 4h1v1h-1zM0 5h1v1h-1zM8 5h1v1h-1zM0 6h1v1h-1zM8 6h1v1h-1zM0 7h1v1h-1zM8 7h1v1h-1zM0 8h9v1h-9z"/><path fill="#fff" d="M1 1h7v1h-7zM1 2h3v1h-3zM5 2h3v1h-3zM1 3h3v1h-3zM5 3h3v1h-3zM1 4h1v1h-1zM7 4h1v1h-1zM1 5h3v1h-3zM5 5h3v1h-3zM1 6h3v1h-3zM5 6h3v1h-3zM1 7h7v1h-7z"/><path fill="#000" d="M4 2h1v1h-1zM4 3h1v1h-1zM2 4h5v1h-5zM4 5h1v1h-1zM4 6h1v1h-1z"/></svg>
<svg style="left:31px;top:135px" width="15" height="13" viewBox="0 0 15 13" shape-rendering="crispEdges"><path fill="#808080" d="M1 0h5v1h-5zM0 1h1v1h-1zM6 1h1v1h-1zM0 2h1v1h-1zM7 2h7v1h-7zM0 3h1v1h-1zM13 3h1v1h-1zM0 4h1v1h-1zM13 4h1v1h-1zM0 5h1v1h-1zM13 5h1v1h-1zM0 6h1v1h-1zM13 6h1v1h-1zM0 7h1v1h-1zM13 7h1v1h-1zM0 8h1v1h-1zM13 8h1v1h-1zM0 9h1v1h-1zM13 9h1v1h-1zM0 10h1v1h-1zM13 10h1v1h-1zM0 11h14v1h-14z"/><path fill="#ffff99" d="M1 1h5v1h-5zM1 2h6v1h-6zM1 3h12v1h-12zM1 4h12v1h-12zM1 5h12v1h-12zM1 6h12v1h-12zM1 7h12v1h-12zM1 8h12v1h-12zM1 9h12v1h-12zM1 10h12v1h-12z"/><path fill="#000" d="M14 3h1v1h-1zM14 4h1v1h-1zM14 5h1v1h-1zM14 6h1v1h-1zM14 7h1v1h-1zM14 8h1v1h-1zM14 9h1v1h-1zM14 10h1v1h-1zM14 11h1v1h-1zM1 12h14v1h-14z"/></svg>
<div class="t " style="left:51.6px;top:135px;transform:scaleX(0.866)">Waldbesitzer</div>
<svg style="left:15px;top:154px" width="9" height="9" viewBox="0 0 9 9" shape-rendering="crispEdges"><path fill="#808080" d="M0 0h9v1h-9zM0 1h1v1h-1zM8 1h1v1h-1zM0 2h1v1h-1zM8 2h1v1h-1zM0 3h1v1h-1zM8 3h1v1h-1zM0 4h1v1h-1zM8 4h1v1h-1zM0 5h1v1h-1zM8 5h1v1h-1zM0 6h1v1h-1zM8 6h1v1h-1zM0 7h1v1h-1zM8 7h1v1h-1zM0 8h9v1h-9z"/><path fill="#fff" d="M1 1h7v1h-7zM1 2h3v1h-3zM5 2h3v1h-3zM1 3h3v1h-3zM5 3h3v1h-3zM1 4h1v1h-1zM7 4h1v1h-1zM1 5h3v1h-3zM5 5h3v1h-3zM1 6h3v1h-3zM5 6h3v1h-3zM1 7h7v1h-7z"/><path fill="#000" d="M4 2h1v1h-1zM4 3h1v1h-1zM2 4h5v1h-5zM4 5h1v1h-1zM4 6h1v1h-1z"/></svg>
<svg style="left:31px;top:151px" width="15" height="13" viewBox="0 0 15 13" shape-rendering="crispEdges"><path fill="#808080" d="M1 0h5v1h-5zM0 1h1v1h-1zM6 1h1v1h-1zM0 2h1v1h-1zM7 2h7v1h-7zM0 3h1v1h-1zM13 3h1v1h-1zM0 4h1v1h-1zM13 4h1v1h-1zM0 5h1v1h-1zM13 5h1v1h-1zM0 6h1v1h-1zM13 6h1v1h-1zM0 7h1v1h-1zM13 7h1v1h-1zM0 8h1v1h-1zM13 8h1v1h-1zM0 9h1v1h-1zM13 9h1v1h-1zM0 10h1v1h-1zM13 10h1v1h-1zM0 11h14v1h-14z"/><path fill="#ffff99" d="M1 1h5v1h-5zM1 2h6v1h-6zM1 3h12v1h-12zM1 4h12v1h-12zM1 5h12v1h-12zM1 6h12v1h-12zM1 7h12v1h-12zM1 8h12v1h-12zM1 9h12v1h-12zM1 10h12v1h-12z"/><path fill="#000" d="M14 3h1v1h-1zM14 4h1v1h-1zM14 5h1v1h-1zM14 6h1v1h-1zM14 7h1v1h-1zM14 8h1v1h-1zM14 9h1v1h-1zM14 10h1v1h-1zM14 11h1v1h-1zM1 12h14v1h-14z"/></svg>
<div class="t " style="left:51.6px;top:151px;transform:scaleX(0.843)">Feldinhalt</div>
<svg style="left:32px;top:168px" width="15" height="11" viewBox="0 0 15 11" shape-rendering="crispEdges"><path fill="#000" d="M0 0h15v1h-15z"/><path fill="#004040" d="M1 1h1v1h-1zM12 1h2v1h-2zM2 2h1v1h-1zM11 2h2v1h-2zM3 3h1v1h-1zM10 3h2v1h-2zM4 4h1v1h-1zM9 4h2v1h-2zM5 5h1v1h-1zM8 5h2v1h-2zM5 6h1v1h-1zM8 6h2v1h-2zM5 7h1v1h-1zM8 7h2v1h-2zM5 8h1v1h-1zM8 8h2v1h-2zM5 9h5v1h-5zM6 10h3v1h-3z"/><path fill="#fff" d="M2 1h10v1h-10zM3 2h8v1h-8zM4 3h6v1h-6zM5 4h4v1h-4zM6 5h2v1h-2zM6 6h2v1h-2zM6 7h2v1h-2zM6 8h2v1h-2z"/></svg>
<div class="t " style="left:51.6px;top:167px;transform:scaleX(0.858)">alle</div>
<div class="a" style="left:270px;top:85px;width:2px;height:359px;background:#f4f4f4"></div>
<!-- FILTER ROW -->
<div class="a" style="left:272px;top:85px;width:131px;height:19px;background:#fff;border:1px solid #000;border-left:2px solid #404040"></div>
<div class="a" style="left:272px;top:85px;width:1px;height:359px;background:#808080"></div>
<div class="gb" style="left:387px;top:86px;width:15px;height:17px;border-left:0;border-color:#fff #404040 #404040 #fff"></div>
<svg style="left:390px;top:92px" width="7" height="4" viewBox="0 0 7 4" shape-rendering="crispEdges"><path fill="#000" d="M0 0h7v1h-7zM1 1h5v1h-5zM2 2h3v1h-3zM3 3h1v1h-1z"/></svg>
<div class="t " style="left:275.8px;top:88px;transform:scaleX(0.832)">Listen-Nr</div>
<div class="t " style="left:419.8px;top:88px;transform:scaleX(0.803)"><u>F</u>iltern:</div>
<div class="a" style="left:461px;top:85px;width:249px;height:19px;background:#fff;border:1px solid #000"></div>
<div class="t " style="left:725.1px;top:88px;transform:scaleX(0.876)"><u>S</u>uchen:</div>
<div class="a" style="left:775px;top:85px;width:241px;height:19px;background:#fff;border:1px solid #000"></div>
<!-- GRID -->
<div class="a" style="left:273px;top:106px;width:743px;height:338px;background:#c0c0c0;border:1px solid #000;border-left-color:#404040"></div>
<div class="a" style="left:1016px;top:106px;width:1px;height:338px;background:#e2ded8"></div>
<div class="a" style="left:274px;top:107px;width:741px;height:15px;background:#ffff77"></div>
<div class="a" style="left:274px;top:122px;width:741px;height:1px;background:#e4e4c0"></div>
<div class="a" style="left:274px;top:123px;width:741px;height:15px;background:#0a246a"></div>
<div class="a" style="left:274px;top:138px;width:741px;height:1px;background:#c8c8c8"></div>
<div class="a" style="left:324px;top:107px;width:1px;height:15px;background:#8a8a40"></div>
<div class="a" style="left:324px;top:123px;width:1px;height:15px;background:#a8b0c8"></div>
<div class="a" style="left:489px;top:107px;width:1px;height:15px;background:#8a8a40"></div>
<div class="a" style="left:489px;top:123px;width:1px;height:15px;background:#a8b0c8"></div>
<div class="a" style="left:661px;top:107px;width:1px;height:15px;background:#8a8a40"></div>
<div class="a" style="left:661px;top:123px;width:1px;height:15px;background:#a8b0c8"></div>
<div class="a" style="left:737px;top:107px;width:1px;height:15px;background:#8a8a40"></div>
<div class="a" style="left:737px;top:123px;width:1px;height:15px;background:#a8b0c8"></div>
<div class="a" style="left:819px;top:107px;width:1px;height:15px;background:#8a8a40"></div>
<div class="a" style="left:819px;top:123px;width:1px;height:15px;background:#a8b0c8"></div>
<div class="a" style="left:886px;top:107px;width:1px;height:15px;background:#8a8a40"></div>
<div class="a" style="left:886px;top:123px;width:1px;height:15px;background:#a8b0c8"></div>
<div class="a" style="left:953px;top:107px;width:1px;height:15px;background:#8a8a40"></div>
<div class="a" style="left:953px;top:123px;width:1px;height:15px;background:#a8b0c8"></div>
<div class="t " style="left:279.8px;top:107px;transform:scaleX(0.832)">Listen-Nr</div>
<div class="t " style="left:326.8px;top:107px;transform:scaleX(0.861)">Name</div>
<div class="t " style="left:492.3px;top:107px;transform:scaleX(0.850)">Waldbesitzer</div>
<div class="t " style="left:683.8px;top:107px;transform:scaleX(0.861)">Datum</div>
<div class="t " style="left:739.8px;top:107px;transform:scaleX(0.850)">Revier</div>
<div class="t " style="left:839px;top:107px;transform:scaleX(0.871)">Waldmaß</div>
<div class="t " style="left:899.8px;top:107px;transform:scaleX(0.851)">Werksmaß</div>
<div class="a" style="left:954px;top:107px;width:61px;height:15px;overflow:hidden"><div class="t " style="left:34.1px;top:0px;transform:scaleX(0.937)">Schä</div></div>
<div class="t wh" style="left:315.6px;top:123px;transform:scaleX(0.875)">7</div>
<div class="t wh" style="left:326.8px;top:123px;transform:scaleX(0.849)">Kiefer Langeholz</div>
<div class="t wh" style="left:492.3px;top:123px;transform:scaleX(0.846)">Grüne Staatsforsten</div>
<div class="t wh" style="left:678.3px;top:123px;transform:scaleX(0.877)">28.06.10</div>
<div class="a dither" style="left:274px;top:427px;width:741px;height:16px"></div>
<div class="btn" style="left:274px;top:427px;width:16px;height:16px"></div>
<svg style="left:280px;top:431px" width="4" height="7" viewBox="0 0 4 7" shape-rendering="crispEdges"><path fill="#000" d="M3 0h1v1h-1zM2 1h2v1h-2zM1 2h3v1h-3zM0 3h4v1h-4zM1 4h3v1h-3zM2 5h2v1h-2zM3 6h1v1h-1z"/></svg>
<div class="btn" style="left:290px;top:427px;width:176px;height:16px"></div>
<div class="btn" style="left:999px;top:427px;width:16px;height:16px"></div>
<svg style="left:1005px;top:431px" width="4" height="7" viewBox="0 0 4 7" shape-rendering="crispEdges"><path fill="#000" d="M0 0h1v1h-1zM0 1h2v1h-2zM0 2h3v1h-3zM0 3h4v1h-4zM0 4h3v1h-3zM0 5h2v1h-2zM0 6h1v1h-1z"/></svg>
<div class="a" style="left:10px;top:444px;width:1006px;height:1px;background:#fff"></div>
<div class="a" style="left:10px;top:446px;width:1006px;height:1px;background:#909090"></div>
<div class="a" style="left:10px;top:447px;width:1006px;height:1px;background:#404040"></div>
<!-- TABS -->
<div class="a dither" style="left:10px;top:451px;width:88px;height:24px;border:1px solid;border-color:#404040 #fff #fff #404040;box-shadow:inset 1px 1px 0 #808080"></div>
<div class="a" style="left:12px;top:453px;width:85px;height:1px;background:#e8e8e8"></div>
<div class="t " style="left:39.8px;top:457px;transform:scaleX(0.843)"><u>D</u>etails</div>
<div class="btn" style="left:98px;top:451px;width:88px;height:24px"></div>
<div class="t " style="left:131.3px;top:456px;transform:scaleX(0.874)"><u>L</u>ose</div>
<div class="btn" style="left:186px;top:451px;width:88px;height:24px"></div>
<div class="t " style="left:198.6px;top:456px;transform:scaleX(0.852)"><u>H</u>olzwerbung</div>
<div class="btn" style="left:274px;top:451px;width:89px;height:24px"></div>
<div class="t " style="left:289.1px;top:456px;transform:scaleX(0.842)"><u>b</u>ereitgestellt</div>
<!-- DETAIL PANEL -->
<div class="a" style="left:10px;top:476px;width:1006px;height:236px;border:1px solid #000"></div>
<div class="t b" style="left:22.8px;top:491px;transform:scaleX(0.921)"><u>H</u>olzliste:</div>
<div class="t b" style="left:22.8px;top:515px;transform:scaleX(0.934)"><u>L</u>ieferant:</div>
<div class="t " style="left:22.8px;top:540px;transform:scaleX(0.845)"><u>P</u>rojekt - Nr.:</div>
<div class="t " style="left:22.8px;top:564px;transform:scaleX(0.841)">Geschäftsfeld:</div>
<div class="t " style="left:22.3px;top:589px;transform:scaleX(0.856)"><u>W</u>BV-Mitglied::</div>
<div class="t " style="left:22.5px;top:612px;transform:scaleX(0.845)"><u>A</u>nsprechpartner:</div>
<div class="t " style="left:22.8px;top:635px;transform:scaleX(0.849)"><u>B</u>emerkung:</div>
<div class="t " style="left:22.8px;top:660px;transform:scaleX(0.845)"><u>E</u>xt. HAB - Nr.:</div>
<div class="fld " style="left:111px;top:488px;width:65px;height:19px"></div>
<div class="fld " style="left:178px;top:488px;width:220px;height:19px"></div>
<div class="t " style="left:164.6px;top:491px;transform:scaleX(0.875)">7</div>
<div class="t " style="left:180.8px;top:491px;transform:scaleX(0.849)">Kiefer Langeholz</div>
<div class="fld " style="left:111px;top:512px;width:65px;height:19px"></div>
<div class="fld g" style="left:178px;top:512px;width:189px;height:19px"></div>
<div class="t " style="left:143px;top:515px;transform:scaleX(0.854)">70606</div>
<div class="t " style="left:180.8px;top:515px;transform:scaleX(0.867)">FB WASSERSTADT</div>
<div class="gb" style="left:367px;top:512px;width:18px;height:19px"></div><svg style="left:373px;top:516px" width="10" height="12" viewBox="0 0 10 12"><circle cx="3.5" cy="3.5" r="2.9" fill="#e8e8e8" stroke="#000" stroke-width="1.1"/><path d="M5.6 5.8L7.6 9.6" stroke="#000" stroke-width="1.9" stroke-linecap="round"/></svg>
<div class="gb" style="left:385px;top:512px;width:13px;height:19px"></div><svg style="left:388px;top:519px" width="7" height="4" viewBox="0 0 7 4" shape-rendering="crispEdges"><path fill="#000" d="M0 0h7v1h-7zM1 1h5v1h-5zM2 2h3v1h-3zM3 3h1v1h-1z"/></svg>
<div class="fld " style="left:111px;top:537px;width:65px;height:19px"></div>
<div class="fld g" style="left:178px;top:537px;width:189px;height:19px"></div>
<div class="t " style="left:143px;top:540px;transform:scaleX(0.854)">20001</div>
<div class="t " style="left:180.8px;top:540px;transform:scaleX(0.848)">SW Bergdorf</div>
<div class="gb" style="left:367px;top:537px;width:18px;height:19px"></div><svg style="left:373px;top:541px" width="10" height="12" viewBox="0 0 10 12"><circle cx="3.5" cy="3.5" r="2.9" fill="#e8e8e8" stroke="#000" stroke-width="1.1"/><path d="M5.6 5.8L7.6 9.6" stroke="#000" stroke-width="1.9" stroke-linecap="round"/></svg>
<div class="gb" style="left:385px;top:537px;width:13px;height:19px"></div><svg style="left:388px;top:544px" width="7" height="4" viewBox="0 0 7 4" shape-rendering="crispEdges"><path fill="#000" d="M0 0h7v1h-7zM1 1h5v1h-5zM2 2h3v1h-3zM3 3h1v1h-1z"/></svg>
<div class="fld " style="left:111px;top:562px;width:148px;height:19px"></div><div class="gb" style="left:243px;top:563px;width:15px;height:17px;border-left:0;border-color:#fff #404040 #404040 #fff"></div><svg style="left:246px;top:569px" width="7" height="4" viewBox="0 0 7 4" shape-rendering="crispEdges"><path fill="#000" d="M0 0h7v1h-7zM1 1h5v1h-5zM2 2h3v1h-3zM3 3h1v1h-1z"/></svg>
<div class="t " style="left:114.8px;top:565px;transform:scaleX(0.876)">Handel</div>
<div class="fld " style="left:111px;top:586px;width:256px;height:19px"></div><div class="gb" style="left:352px;top:587px;width:15px;height:17px;border-left:0;border-color:#fff #404040 #404040 #fff"></div><svg style="left:355px;top:593px" width="7" height="4" viewBox="0 0 7 4" shape-rendering="crispEdges"><path fill="#000" d="M0 0h7v1h-7zM1 1h5v1h-5zM2 2h3v1h-3zM3 3h1v1h-1z"/></svg>
<div class="t " style="left:114.8px;top:589px;transform:scaleX(0.840)">Meier Fritz, Walddorf</div>
<div class="gb" style="left:367px;top:586px;width:18px;height:19px"></div><svg style="left:373px;top:590px" width="10" height="12" viewBox="0 0 10 12"><circle cx="3.5" cy="3.5" r="2.9" fill="#e8e8e8" stroke="#000" stroke-width="1.1"/><path d="M5.6 5.8L7.6 9.6" stroke="#000" stroke-width="1.9" stroke-linecap="round"/></svg>
<div class="gb" style="left:385px;top:586px;width:13px;height:19px"></div><svg style="left:388px;top:593px" width="7" height="4" viewBox="0 0 7 4" shape-rendering="crispEdges"><path fill="#000" d="M0 0h7v1h-7zM1 1h5v1h-5zM2 2h3v1h-3zM3 3h1v1h-1z"/></svg>
<div class="fld " style="left:111px;top:610px;width:269px;height:18px"></div>
<div class="gb" style="left:382px;top:610px;width:16px;height:17px"></div><svg style="left:386px;top:616px" width="7" height="4" viewBox="0 0 7 4" shape-rendering="crispEdges"><path fill="#000" d="M0 0h7v1h-7zM1 1h5v1h-5zM2 2h3v1h-3zM3 3h1v1h-1z"/></svg>
<div class="fld " style="left:111px;top:633px;width:269px;height:18px"></div>
<div class="gb" style="left:382px;top:633px;width:16px;height:17px"></div><svg style="left:386px;top:639px" width="7" height="4" viewBox="0 0 7 4" shape-rendering="crispEdges"><path fill="#000" d="M0 0h7v1h-7zM1 1h5v1h-5zM2 2h3v1h-3zM3 3h1v1h-1z"/></svg>
<div class="fld " style="left:111px;top:657px;width:149px;height:19px"></div>
<div class="t b" style="left:290.8px;top:660px;transform:scaleX(1.016)">100</div>
<div class="t " style="left:316.3px;top:660px;transform:scaleX(0.737)">%</div>
<div class="t " style="left:327.3px;top:660px;transform:scaleX(0.814)">zertifizierter EK</div>
<div class="t " style="left:434.8px;top:491px;transform:scaleX(0.839)">HAB - <u>D</u>atum:</div>
<div class="t " style="left:434.8px;top:515px;transform:scaleX(0.849)">Hiebszeit <u>v</u>on:</div>
<div class="t " style="left:434.8px;top:540px;transform:scaleX(0.813)">Kalamität:</div>
<div class="t " style="left:434.8px;top:565px;transform:scaleX(0.836)"><u>i</u>nterner Vermek:</div>
<div class="t " style="left:434.6px;top:610px;transform:scaleX(0.844)"><u>A</u>bfuhrhinweis:</div>
<div class="t " style="left:437.1px;top:657px;transform:scaleX(0.824)">Nummernkreis je Los:</div>
<div class="fld " style="left:520px;top:488px;width:100px;height:19px"></div><div class="gb" style="left:604px;top:489px;width:15px;height:17px;border-left:0;border-color:#fff #404040 #404040 #fff"></div><svg style="left:607px;top:496px" width="7" height="4" viewBox="0 0 7 4" shape-rendering="crispEdges"><path fill="#000" d="M0 0h7v1h-7zM1 1h5v1h-5zM2 2h3v1h-3zM3 3h1v1h-1z"/></svg>
<div class="t " style="left:523.8px;top:491px;transform:scaleX(0.874)">28.06.2010</div>
<div class="fld " style="left:520px;top:512px;width:100px;height:19px"></div><div class="gb" style="left:604px;top:513px;width:15px;height:17px;border-left:0;border-color:#fff #404040 #404040 #fff"></div><svg style="left:607px;top:520px" width="7" height="4" viewBox="0 0 7 4" shape-rendering="crispEdges"><path fill="#000" d="M0 0h7v1h-7zM1 1h5v1h-5zM2 2h3v1h-3zM3 3h1v1h-1z"/></svg>
<div class="t " style="left:523.3px;top:515px;transform:scaleX(0.874)">__.__.____</div>
<div class="t " style="left:633.6px;top:515px;transform:scaleX(0.807)"><u>b</u>is:</div>
<div class="fld " style="left:661px;top:512px;width:101px;height:19px"></div><div class="gb" style="left:746px;top:513px;width:15px;height:17px;border-left:0;border-color:#fff #404040 #404040 #fff"></div><svg style="left:749px;top:520px" width="7" height="4" viewBox="0 0 7 4" shape-rendering="crispEdges"><path fill="#000" d="M0 0h7v1h-7zM1 1h5v1h-5zM2 2h3v1h-3zM3 3h1v1h-1z"/></svg>
<div class="t " style="left:664.3px;top:515px;transform:scaleX(0.874)">__.__.____</div>
<div class="fld " style="left:520px;top:537px;width:100px;height:19px"></div><div class="gb" style="left:604px;top:538px;width:15px;height:17px;border-left:0;border-color:#fff #404040 #404040 #fff"></div><svg style="left:607px;top:545px" width="7" height="4" viewBox="0 0 7 4" shape-rendering="crispEdges"><path fill="#000" d="M0 0h7v1h-7zM1 1h5v1h-5zM2 2h3v1h-3zM3 3h1v1h-1z"/></svg>
<div class="t " style="left:523.8px;top:540px;transform:scaleX(0.840)">Normalnutzung</div>
<div class="btn" style="left:621px;top:537px;width:17px;height:19px"></div>
<div class="t " style="left:624.8px;top:540px;transform:scaleX(0.931)">...</div>
<div class="fld " style="left:660px;top:537px;width:32px;height:19px"></div>
<div class="t " style="left:681.6px;top:540px;transform:scaleX(0.875)">0</div>
<div class="t " style="left:694.8px;top:540px;transform:scaleX(0.737)">%</div>
<div class="fld " style="left:520px;top:565px;width:245px;height:40px"></div>
<div class="fld " style="left:520px;top:610px;width:245px;height:40px"></div>
<div class="a" style="left:607px;top:657px;width:13px;height:13px;background:#fff;border:1px solid;border-color:#808080 #fff #fff #808080;box-shadow:inset 1px 1px 0 #404040,inset -1px -1px 0 #d4d0c8"></div>
<!-- STATUS -->
<div class="t " style="left:11.8px;top:723px;transform:scaleX(0.853)">Datensatz ändern - geändert</div>
<div class="btn" style="left:743px;top:717px;width:133px;height:25px"></div>
<div class="t dis" style="left:775.3px;top:723px;transform:scaleX(0.850)"><u>N</u>ummernbuch</div>
<div class="btn" style="left:883px;top:717px;width:133px;height:25px"></div>
<div class="t " style="left:925.7px;top:723px;transform:scaleX(0.858)"><u>S</u>chließen</div>
<div class="a" style="left:0;top:748px;width:1024px;height:1px;background:#fff"></div>
<div class="sp" style="left:0px;width:515px;top:751px;height:17px"></div>
<div class="sp" style="left:517px;width:229px;top:751px;height:17px"></div>
<div class="sp" style="left:747px;width:99px;top:751px;height:17px"></div>
<div class="sp" style="left:848px;width:67px;top:751px;height:17px"></div>
<div class="sp" style="left:916px;width:66px;top:751px;height:17px"></div>
<div class="sp" style="left:984px;width:39px;top:751px;height:17px"></div>
<div class="t " style="left:521.3px;top:753px;transform:scaleX(0.861)">2 DekaData Rundholzhandel</div>
<div class="t " style="left:750.3px;top:753px;transform:scaleX(0.896)">WJ 2010</div>
<div class="t " style="left:851.9px;top:753px;transform:scaleX(0.885)">DekaData</div>
<div class="t " style="left:920px;top:753px;transform:scaleX(0.877)">MS Access</div>
<div class="t gry" style="left:987.8px;top:753px;transform:scaleX(0.817)">EINFG</div>
</div>
</body>
</html>
